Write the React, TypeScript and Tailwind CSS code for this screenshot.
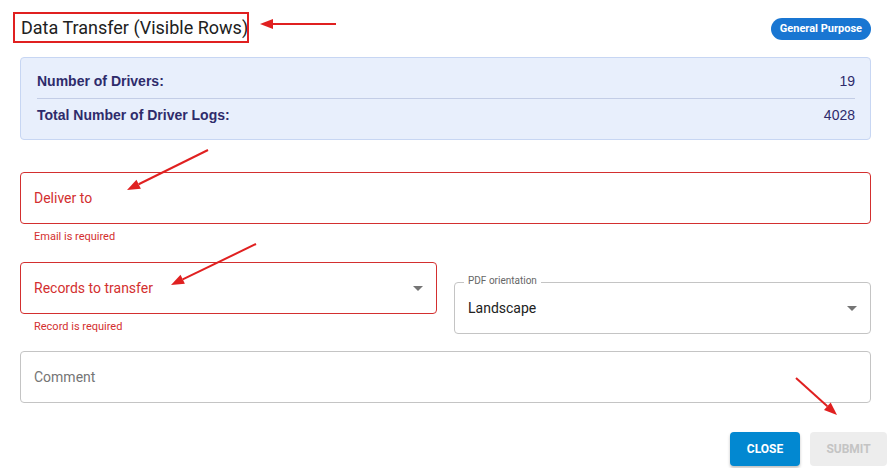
import React from "react";

function Caret({ color = "#757575" }: { color?: string }) {
  return (
    <svg width="10" height="5" viewBox="0 0 10 5" className="shrink-0">
      <path d="M0 0 L10 0 L5 5 Z" fill={color} />
    </svg>
  );
}

function Arrow({ x1, y1, x2, y2 }: { x1: number; y1: number; x2: number; y2: number }) {
  const ang = Math.atan2(y2 - y1, x2 - x1);
  const len = 13;
  const w = 5;
  const bx = x2 - len * Math.cos(ang);
  const by = y2 - len * Math.sin(ang);
  const px = -Math.sin(ang) * w;
  const py = Math.cos(ang) * w;
  return (
    <g>
      <line x1={x1} y1={y1} x2={bx} y2={by} stroke="#e02020" strokeWidth="2" />
      <path d={`M${x2} ${y2} L${bx + px} ${by + py} L${bx - px} ${by - py} Z`} fill="#e02020" />
    </g>
  );
}

export default function App() {
  return (
    <div
      className="relative w-[892px] h-[468px] bg-white overflow-hidden"
      style={{ fontFamily: "Roboto, 'Liberation Sans', sans-serif" }}
    >
      <div className="flex flex-col pl-[20px] pr-[21px]">
        {/* header */}
        <div className="flex items-center justify-between h-[30px] mt-[13px]">
          <h1 className="text-[18px] text-[#212121] font-normal leading-none pl-[1px]">
            Data Transfer (Visible Rows)
          </h1>
          <span className="h-[22px] px-[9px] flex items-center rounded-full bg-[#1976d2] text-white text-[11px] font-bold mt-[2px]">
            General Purpose
          </span>
        </div>

        {/* summary */}
        <div
          className="mt-[14px] h-[83px] rounded-[4px] border border-[#c7d6f3] bg-[#e8effc] pl-[16px] pr-[15px] flex flex-col justify-center text-[#2e2b6b] text-[14px]"
          style={{ fontFamily: "'Liberation Sans', Arial, sans-serif" }}
        >
          <div className="flex justify-between items-center h-[33px] border-b border-[#c3cde6]">
            <span className="font-bold">Number of Drivers:</span>
            <span>19</span>
          </div>
          <div className="flex justify-between items-center h-[33px]">
            <span className="font-bold">Total Number of Driver Logs:</span>
            <span>4028</span>
          </div>
        </div>

        {/* deliver to */}
        <div className="mt-[32px] h-[52px] rounded-[4px] border border-[#d32f2f] flex items-center px-[13px]">
          <span className="text-[14px] text-[#d32f2f]">Deliver to</span>
        </div>
        <div className="text-[11px] text-[#d32f2f] pl-[14px] mt-[6px] leading-[14px]">Email is required</div>

        {/* selects */}
        <div className="mt-[18px] flex gap-[17px] items-start">
          <div className="flex-1 flex flex-col">
            <div className="h-[52px] rounded-[4px] border border-[#d32f2f] flex items-center justify-between pl-[13px] pr-[13px]">
              <span className="text-[14px] text-[#d32f2f]">Records to transfer</span>
              <Caret />
            </div>
            <div className="text-[11px] text-[#d32f2f] pl-[14px] mt-[6px] leading-[14px]">Record is required</div>
          </div>
          <div className="flex-1 relative mt-[20px]">
            <div className="h-[52px] rounded-[4px] border border-[#c4c4c4] flex items-center justify-between pl-[13px] pr-[13px]">
              <span className="text-[14px] text-[#212121]">Landscape</span>
              <Caret />
            </div>
            <span className="absolute left-[10px] -top-[7px] bg-white px-[4px] text-[10px] leading-[12px] text-[#666]">
              PDF orientation
            </span>
          </div>
        </div>

        {/* comment */}
        <div className="mt-[17px] h-[52px] rounded-[4px] border border-[#c4c4c4] flex items-center px-[13px]">
          <span className="text-[14px] text-[#757575]">Comment</span>
        </div>

        {/* actions */}
        <div className="mt-[29px] flex justify-end gap-[10px] -mr-[16px]">
          <button className="h-[34px] w-[70px] rounded-[4px] bg-[#0288d1] text-white text-[12px] font-bold shadow-[0_2px_3px_rgba(0,0,0,0.25)]">
            CLOSE
          </button>
          <button className="h-[34px] w-[77px] rounded-[4px] bg-[#ededed] text-[#c4c4c4] text-[12px] font-bold">
            SUBMIT
          </button>
        </div>
      </div>

      {/* annotations */}
      <svg className="absolute inset-0 pointer-events-none" width="892" height="468">
        <rect x="14" y="13" width="234" height="29" fill="none" stroke="#e02020" strokeWidth="2" />
        <Arrow x1={336} y1={24} x2={260} y2={24} />
        <Arrow x1={208} y1={150} x2={127} y2={190} />
        <Arrow x1={256} y1={244} x2={171} y2={285} />
        <Arrow x1={796} y1={378} x2={837} y2={415} />
      </svg>
    </div>
  );
}
